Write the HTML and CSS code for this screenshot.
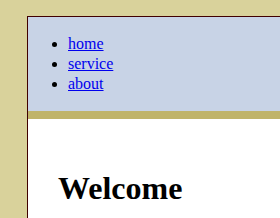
FILE: index.html
```html
<!DOCTYPE html>
<html lang="en">
  <head>
    <meta charset="UTF-8" />
    <meta name="viewport" content="width=device-width, initial-scale=1.0" />
    <title>Welcome</title>
    <link rel="stylesheet" href="styles.css">
  </head>
  <body>
    <div class="page">
      <div class="nav">
        <ul class="menu">
          <li><a href="#">home</a></li>
          <li><a href="#">service</a></li>
          <li><a href="#">about</a></li>
        </ul>
      </div>
      <div class="content">
        <h1>Welcome</h1>
      </div>
    </div>
  </body>
</html>
```

FILE: styles.css
```css
html,
body {
  height: 100%;
}

body {
  margin: 0;
  background-color: #d9d29b;
  font-family: "Liberation Serif", "Times New Roman", serif;
  overflow: hidden;
}

.page {
  margin: 16px 0 0 27px;
  border-left: 1px solid #400000;
  border-top: 1px solid #400000;
  background-color: #fff;
  height: calc(100% - 17px);
}

.nav {
  background-color: #c8d3e6;
  padding: 1px 0;
  border-bottom: 8px solid #c0b46a;
}

.menu {
  margin: 16px 0;
  padding-left: 40px;
}

.menu li {
  line-height: 20px;
}

.menu a {
  color: #0000ee;
}

.content {
  padding: 30px 30px 0;
}

.content h1 {
  font-size: 32px;
  margin-bottom: 0;
}
```
